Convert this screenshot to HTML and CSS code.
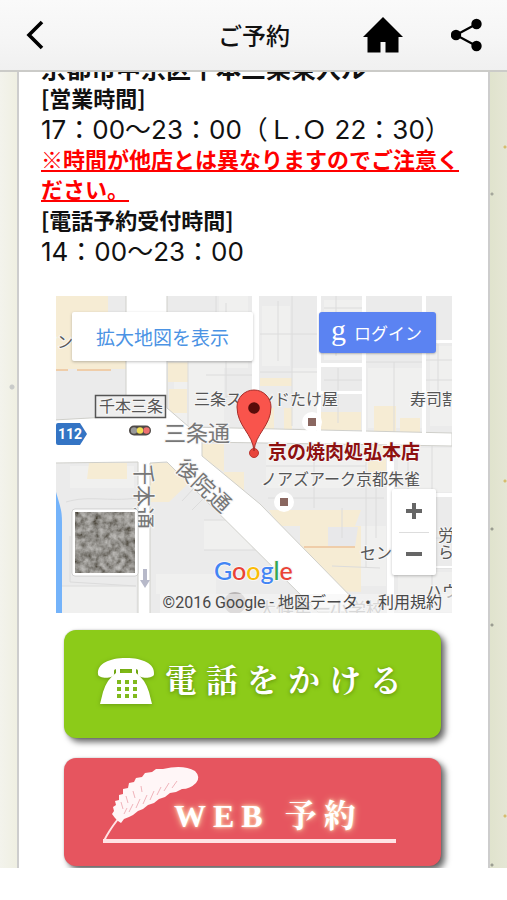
FILE: index.html
```html
<!DOCTYPE html>
<html lang="ja">
<head>
<meta charset="utf-8">
<meta name="viewport" content="width=device-width, initial-scale=1">
<title>ご予約</title>
<link rel="stylesheet" href="styles.css">
</head>
<body>
<header class="bar">
  <button class="bar-btn back" type="button" aria-label="戻る">
    <svg width="20" height="30" viewBox="0 0 20 30"><path d="M18 2 5 15l13 13" fill="none" stroke="#000" stroke-width="3.6"/></svg>
  </button>
  <h1 class="bar-title">ご予約</h1>
  <a class="bar-btn" href="#home" aria-label="ホーム">
    <svg width="40" height="36" viewBox="0 0 40 36"><path d="M20 0 40 20h-4.500v15.500H22.500V25h-5v10.500H4.500V20H0z" fill="#000"/></svg>
  </a>
  <button class="bar-btn" type="button" aria-label="共有">
    <svg width="32" height="34" viewBox="0 0 32 34"><path d="M25.500 6 5 17l20.500 11" fill="none" stroke="#000" stroke-width="2.200"/><circle cx="25.500" cy="6" r="5.200"/><circle cx="5" cy="17" r="5.200"/><circle cx="25.500" cy="28" r="5.200"/></svg>
  </button>
</header>

<main class="scroller">
  <article class="card">
    <section class="info">
      <p class="strong address">京都市中京区千本三条東入ル</p>
      <h2 class="strong">[営業時間]</h2>
      <p class="hours">17：00〜23：00（Ｌ.Ｏ 22：30）</p>
      <p class="notice">※時間が他店とは異なりますのでご注意ください。</p>
      <h2 class="strong">[電話予約受付時間]</h2>
      <p class="hours">14：00〜23：00</p>
    </section>

    <section class="map" aria-label="地図">
      <svg class="map-art" viewBox="0 0 396 317">
        <defs>
          <filter id="aerial" x="0" y="0" width="1" height="1">
            <feTurbulence type="fractalNoise" baseFrequency="0.16" numOctaves="3" seed="8"/>
            <feColorMatrix values="0.6 0.2 0 0 -0.100  0.6 0.2 0 0 -0.110  0.6 0.2 0 0 -0.130  0 0 0 0 1"/>
          </filter>
        </defs>
        <rect width="396" height="317" fill="#ebebeb"/>
        <g fill="#f0f0ef">
          <path d="M163 0h29v72h-29zM118 40h50v90h-50zM206 10h28v60h-28zM236 72h25v60h-25zM268 4h38v60h-38zM312 72h54v60h-54zM374 50h22v80h-22zM210 152h110v40H210zM342 152h54v44h-54zM14 170h64v22H14zM148 224h48v30h-48zM0 290h80v27H0zM100 278h60v20h-60zM276 230h54v60h-54zM342 276h54v40h-54z"/>
        </g>
        <g fill="#f6ecd4">
          <path d="M0 0h52v53h19v20H0zM112 66h20v20h-20zM113 93h18v24h-18zM204 82h32v8h-32zM206 112h12v22h-12zM228 112h8v24h-8zM265 116h40v18h-40zM318 110h22v27h-22zM344 122h20v16h-20zM94 167h22l17 20-20 19H94zM33 167h38v16H31zM146 148h22v28l-22-14zM168 176h20v18h-20zM312 148h18v40h-18zM213 214h92l-6 16h6v66l-54-2-7-40v-24h-22z"/>
        </g>
        <path d="M272 231h30l-3 20h-27z" fill="#e8e8ea"/>
        <path d="M248 251h51M0 74h12M21 74h34" stroke="#efcda9" stroke-width="2"/>
        <g fill="none" stroke="#dcdcdc">
          <path d="M204 38h57M204 76h57M236 0v130M222 5v60M268 12h38M280 0v60M268 84h38M282 72v55M309 42h57M309 66h57M338 66v70M370 64h26M370 84h26M382 48v60M112 46h80M112 66h84M132 64v66M160 0v50M112 17h50M170 7v104M150 79h46M170 100h24M10 206c24-7 40 0 72-4M14 240v46l66 4M0 290h80M148 224h52M148 254h52M210 170h100M258 152v60M212 202h116M286 212v30M310 152v120M320 182v60M352 150v60M376 150v160M340 242h56M340 272h56M276 270l48 2M126 205l26-28M136 214l18-18M0 128h70"/>
        </g>
        <path d="M-2 124 70 120V-2h41v114l22 19 263 6v13l-250-4v14l58 48 106 108h-48L111 166l-17 1v155H82V166l-84 1z" fill="#fff" stroke="#cfcfca"/>
        <path d="M196 0h7v135h-7zM261 0h4v136h-4zM306 0h4v137h-4zM366 0h4v138h-4zM264 67h43v4h-43zM264 95h43v3h-43zM369 44h27v3h-27zM331 148h7v169h-7zM338 197h58v4h-58zM340 270h56v2h-56z" fill="#fff"/>
        <path d="M0 196c4 14 6 18 6 30v91H0z" fill="#74b3fa"/>
        <path d="M89 273v13" stroke="#b7b9c9" stroke-width="4"/><path d="m84 284 5 8 5-8z" fill="#b7b9c9"/>
        <circle cx="179" cy="307" r="11" fill="#b9b5b5"/>

        <g class="lbl">
          <text x="-15" y="52">マン</text>
          <rect x="39.500" y="99.500" width="70" height="22" fill="#eee" stroke="#555" stroke-width="1.500"/>
          <text x="43" y="116">千本三条</text>
          <text x="138" y="109">三条スタンドたけ屋</text>
          <text x="354" y="109">寿司割</text>
          <text x="205" y="189">ノアズアーク京都朱雀</text>
          <text x="304" y="263">セン</text>
          <text x="382" y="245">労</text>
          <text x="382" y="262">ら</text>
          <text x="370" y="301">ハウ</text>
          <text x="202" y="320" class="faint">大條第一小学校</text>
        </g>
        <g class="road">
          <text x="108" y="145">三条通</text>
          <text transform="translate(118 173) rotate(43)">後院通</text>
          <text transform="translate(80 167) rotate(90)">千本通</text>
        </g>
        <path d="M2 127h22l7 11-7 11H2q-2 0-2-2v-18q0-2 2-2z" fill="#3474c4"/>
        <text class="route" x="2" y="143">112</text>
        <rect x="73" y="129.500" width="22" height="10" rx="5" fill="#4e4946"/><circle cx="78" cy="134.500" r="3.200" fill="#999"/><circle cx="84" cy="134.500" r="3.200" fill="#f1df55"/><circle cx="90.500" cy="134.500" r="3.200" fill="#ef7070"/>
        <circle cx="256" cy="126" r="10" fill="#fff"/><rect x="252" y="122" width="8" height="8" fill="#8a6760"/>
        <circle cx="228" cy="206" r="10" fill="#fff"/><rect x="224" y="202" width="8" height="8" fill="#8a6760"/>
        <text class="place" x="212" y="163">京の焼肉処弘本店</text>
        <circle cx="198" cy="157" r="4.500" fill="#e8453c" stroke="#bb3630"/>
        <path d="M198 155c-1-17-17-25-17-44a17 17 0 0 1 34 0c0 19-16 27-17 44z" fill="#f9544c" stroke="#a62f2b"/>
        <circle cx="198" cy="112" r="5.800" fill="#590c0a"/>
        <rect x="16" y="213" width="66" height="67" rx="3" fill="#fff" stroke="#bbb" stroke-width=".6"/>
        <rect x="19" y="216" width="60" height="61" filter="url(#aerial)"/>
        <rect x="104" y="298" width="292" height="19" fill="#f5f5f5" opacity=".6"/>
        <text class="logo" x="158" y="284"><tspan fill="#4285f4">G</tspan><tspan fill="#ea4335">o</tspan><tspan fill="#fbbc05">o</tspan><tspan fill="#4285f4">g</tspan><tspan fill="#34a853">l</tspan><tspan fill="#ea4335">e</tspan></text>
      </svg>
      <a class="map-open" href="#map">拡大地図を表示</a>
      <a class="map-login" href="#login"><span class="g">g</span>ログイン</a>
      <div class="zoom">
        <button type="button" aria-label="拡大"><svg width="16" height="16" viewBox="0 0 16 16"><path d="M8 0v16M0 8h16" stroke="#666" stroke-width="4"/></svg></button>
        <button type="button" aria-label="縮小"><svg width="16" height="16" viewBox="0 0 16 16"><path d="M0 8h16" stroke="#666" stroke-width="4"/></svg></button>
      </div>
      <p class="credit"><span>©2016 Google - 地図データ</span><span>・</span><a href="#terms">利用規約</a></p>
    </section>

    <a class="cta call" href="#call">
      <svg width="58" height="48" viewBox="0 0 58 48">
        <path d="M1 17C0 7 12 1 29 1s29 6 28 16c0 5-16 5-16 0v-3q0-2-3-2V9h-3v3H23V9h-3v3q-3 0-3 2v3c0 5-16 5-16 0z" fill="#fff"/>
        <path d="M19 9h4v7h12V9h4v7q9 6 13 19l3 12H3l3-12q4-13 13-19z" fill="#fff"/>
        <path d="M20 23h4v4h-4zm8 0h4v4h-4zm8 0h4v4h-4zM20 30h4v4h-4zm8 0h4v4h-4zm8 0h4v4h-4zM20 37h4v4h-4zm8 0h4v4h-4zm8 0h4v4h-4z" fill="#80b91c"/>
      </svg>
      <span>電話をかける</span>
    </a>
    <a class="cta web" href="#web">
      <svg class="quill" viewBox="0 0 377 108">
        <path d="M40 83Q44 74 54 61" fill="none" stroke="#ffe3e5" stroke-width="2"/>
        <path d="M39 81h293v4H39z" fill="#ffe3e5"/>
        <path d="M54 63l-3-3-3-4 2-3-1-4 3-2-1-4 4-1 0-5 4-1 0-5 5-1 1-5 5-1 2-4 6-1 3-4 7-1 4-3 7 0q20-5 32 2 6 6 1 12-6 6-14 6l-6 3-6 1-5 4-6 2-5 4-6 2-5 4-5 2-5 4-4 2-5 2-3 4z" fill="#fff6f7"/>
        <path d="M60 56l3-6m2 4 4-8m3 4 4-9m3 5 4-9m3 5 4-9m3 4 4-8m3 4 5-8m3 5 5-7M57 44l2 7m3-13 2 7m5-12 2 7m6-12 1 6" fill="none" stroke="#f0b4bb"/>
      </svg>
      <span>WEB 予約</span>
    </a>
  </article>
</main>
<footer class="foot"></footer>
</body>
</html>
```
FILE: styles.css
```css
* { box-sizing: border-box; }
body {
  margin: 0;
  height: 100vh;
  display: flex;
  flex-direction: column;
  overflow: hidden;
  background: #fff;
  color: #111;
  font-family: "Noto Sans CJK JP", sans-serif;
}
h1, h2, p { margin: 0; }
a { color: inherit; text-decoration: none; }
button { padding: 0; border: 0; background: none; }
svg { display: block; }

.bar {
  flex: none;
  height: 72px;
  padding: 0 24px;
  display: grid;
  grid-template-columns: 116px 1fr 40px 32px;
  column-gap: 48px;
  align-items: center;
  background: linear-gradient(#fafafa, #f5f5f5 60%, #f0f0f0);
  border-bottom: 2px solid #cbcbc8;
  position: relative;
  z-index: 1;
}
.bar-title { font-size: 24px; line-height: 36px; font-weight: 500; padding-left: 30px; }
.bar-btn { justify-self: start; }

.scroller {
  flex: 1;
  min-height: 0;
  overflow: hidden;
  padding: 0 17px;
  background:
    radial-gradient(circle at 12px 315px, #c9cbc9 2px, transparent 3px),
    radial-gradient(circle at 505px 75px, #d5bd70 1px, transparent 2px),
    radial-gradient(circle at 492px 122px, #a5a79b 1px, transparent 2px),
    radial-gradient(circle at 505px 409px, #d5bd70 1px, transparent 2px),
    radial-gradient(circle at 492px 457px, #9b9d91 1px, transparent 2px),
    radial-gradient(circle at 492px 553px, #9b9d91 1px, transparent 2px),
    radial-gradient(circle at 505px 744px, #d5bd70 1px, transparent 2px),
    radial-gradient(circle at 492px 793px, #9b9d91 1px, transparent 2px),
    linear-gradient(90deg, #f3f3ec, #efefe2 17px, #e0e3cd 490px, #e5e6d5);
}
.card {
  background: #fff;
  border: solid #cdcdcd;
  border-width: 0 2px;
  padding: 0 36px 40px 37px;
  margin-top: -20px;
}
.info { margin: 0 -15px 31px; }
.strong, .notice { font-size: 22px; line-height: 30px; font-weight: 700; }
.address { font-size: 25px; }
.hours {
  font: 400 26px/30px Inter, "Noto Sans CJK JP", sans-serif;
  margin: 3px 0 -2px;
  white-space: nowrap;
}
.notice { color: #f00; text-decoration: underline; margin: 0 -8px 1px 0; }

.map { position: relative; }
.map-art { width: 100%; height: auto; }
.map-art text { font-family: "Noto Sans CJK JP", sans-serif; }
.lbl text { font-size: 16px; fill: #555; }
.lbl .faint { fill: #aaa; font-size: 18px; }
.road text { font-size: 22px; fill: #777; }
.map-art .route { font-family: Roboto, sans-serif; font-size: 14px; font-weight: 700; fill: #fff; }
.map-art .place { font-size: 19px; font-weight: 700; fill: #8e1010; }
.lbl text, .road text, .place, .logo { stroke: #f6f6f6; stroke-width: 2px; paint-order: stroke; }
.map-art .logo { font-family: Lato, sans-serif; font-size: 25px; font-weight: 500; }
.map-open, .map-login, .zoom, .credit { position: absolute; }
.map-open {
  left: 16px; top: 16px;
  padding: 0 24px;
  font-size: 19px; line-height: 49px;
  color: #4b93e4;
  background: #fff;
  border-radius: 2px;
  box-shadow: 0 1px 3px rgba(0,0,0,.25);
}
.map-login {
  right: 16px; top: 16px;
  width: 117px; height: 41px;
  display: flex; align-items: center; gap: 8px;
  padding-left: 12px;
  font-size: 17px; line-height: 24px;
  color: #fff;
  background: #5b83f2;
  border-radius: 3px;
  box-shadow: 0 1px 2px rgba(0,0,0,.25);
}
.g { font-family: "Liberation Serif", serif; font-size: 30px; line-height: 30px; padding-bottom: 6px; }
.zoom {
  right: 16px; bottom: 38px;
  width: 44px;
  padding: 0 7px;
  background: #fff;
  border-radius: 2px;
  box-shadow: 0 1px 3px rgba(0,0,0,.25);
}
.zoom button { width: 100%; height: 43px; display: grid; place-items: center; }
.zoom button + button { border-top: 1px solid #ddd; }
.credit {
  right: 10px; bottom: 0;
  display: flex; gap: 2px;
  font: 16px/20px Roboto, "Noto Sans CJK JP", sans-serif;
  color: #484848;
  white-space: nowrap;
}

.cta {
  position: relative;
  display: flex;
  align-items: center;
  height: 108px;
  margin: 17px 11px 0 8px;
  border-radius: 12px;
  color: #fff;
  font: 700 32px/40px "Liberation Serif", "Noto Serif CJK JP", "Noto Sans CJK JP", serif;
  white-space: nowrap;
  box-shadow: 4px 4px 6px rgba(0,0,0,.6), 0 0 2px rgba(0,0,0,.2);
}
.call { background: #8ccb19; padding: 0 0 6px 33px; gap: 10px; letter-spacing: 9px; text-shadow: 0 1px 4px #5c8c0c; }
.call svg { filter: drop-shadow(0 1px 2px #6a9d12); }
.web { background: #e6555f; margin-top: 20px; padding: 8px 0 0 110px; letter-spacing: 7px; text-shadow: 0 0 7px #ffd9a8, 0 0 3px #ffe3c0; }
.quill { position: absolute; left: 0; top: 0; width: 100%; height: 100%; }

.foot { flex: none; height: 32px; background: #fff; }
```
